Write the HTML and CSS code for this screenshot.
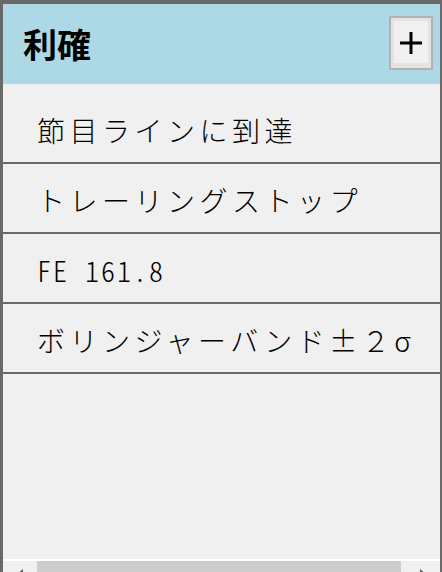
FILE: index.html
```html
<!DOCTYPE html>
<html>
<head>
  <meta charset="utf-8">
  <link rel="stylesheet" href="styles.css">
</head>
<body>
  <div class="panel">
    <div class="header">
      <h2>利確</h2>
      <button class="add-btn" id="addBtn" title="追加">
        <svg width="24" height="24" viewBox="0 0 24 24">
          <path d="M12 1V23M1 12H23" stroke="#000" stroke-width="3" fill="none"/>
        </svg>
      </button>
    </div>

    <div class="list">
      <div class="item">節目ラインに到達</div>
      <div class="item">トレーリングストップ</div>
      <div class="item half">FE 161.8</div>
      <div class="item">ボリンジャーバンド±２σ</div>
    </div>

    <div class="hscroll">
      <div class="arrow"><span class="tri left"></span></div>
      <div class="thumb"></div>
      <div class="arrow end"><span class="tri right"></span></div>
    </div>
  </div>
</body>
</html>
```

FILE: styles.css
```css
html, body {
  margin: 0;
  padding: 0;
  overflow: hidden;
}

body {
  font-family: "Noto Sans CJK JP", "Noto Sans", sans-serif;
  color: #000;
  background: #696969;
}

.panel {
  height: 578px;
  border-top: 4px solid #696969;
  border-left: 3px solid #696969;
  border-right: 2px solid #696969;
  background: #f0f0f0;
  display: flex;
  flex-direction: column;
  box-sizing: border-box;
}

.header {
  height: 80px;
  flex-shrink: 0;
  background: #add8e6;
  display: flex;
  align-items: center;
  justify-content: space-between;
  padding: 0 7px 0 20px;
}

h2 {
  margin: 0;
  font-size: 34px;
  font-weight: 700;
  line-height: 1;
}

.add-btn {
  width: 44px;
  height: 54px;
  margin-top: -2px;
  padding: 0;
  border: 2px solid #b2b2b2;
  background: #f0f0f0;
  box-shadow: inset 0 0 0 3px #e3e3e3, inset 0 -2px 0 3px #e3e3e3;
  display: flex;
  align-items: center;
  justify-content: center;
  cursor: pointer;
}

.list {
  flex: 1;
  padding-top: 10px;
}

.item {
  height: 64px;
  border-bottom: 2px solid #696969;
  display: flex;
  align-items: center;
  padding: 4px 0 0 34px;
  font-size: 28px;
  font-weight: 300;
  letter-spacing: 4.5px;
  white-space: nowrap;
  font-feature-settings: "fwid" 1;
}

.item.half {
  font-feature-settings: "hwid" 1;
  letter-spacing: 2px;
}

.hscroll {
  flex-shrink: 0;
  height: 17px;
  border-top: 2px solid #fff;
  display: flex;
}

.arrow {
  width: 34px;
  display: flex;
  justify-content: center;
  padding-top: 8px;
}

.arrow.end {
  width: 39px;
  padding-left: 5px;
  box-sizing: border-box;
}

.tri {
  width: 0;
  height: 0;
  border-top: 5px solid transparent;
  border-bottom: 5px solid transparent;
}

.tri.left {
  border-right: 6px solid #606060;
}

.tri.right {
  border-left: 6px solid #606060;
}

.thumb {
  width: 364px;
  background: #cdcdcd;
}
```
